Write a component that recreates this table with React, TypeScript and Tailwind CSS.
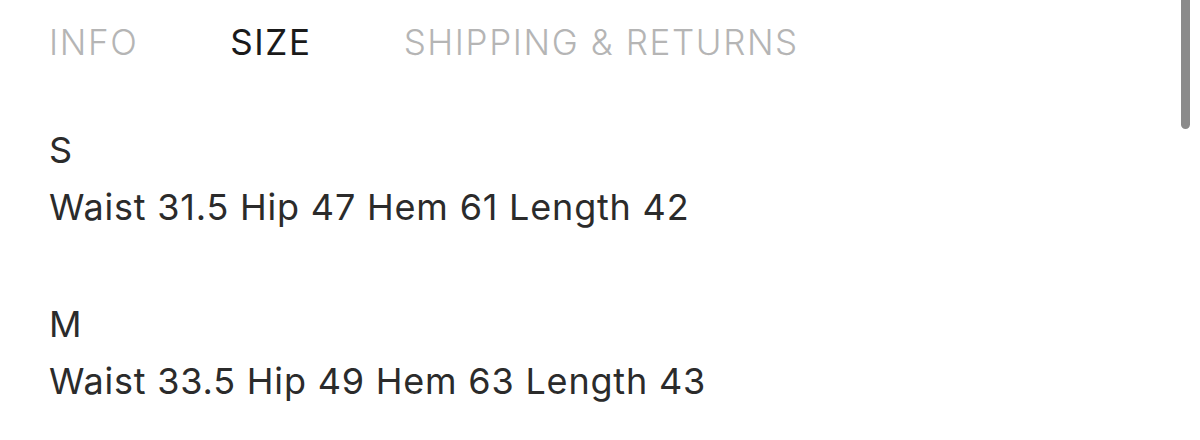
import React from "react";

const sizes = [
  { name: "S", text: "Waist 31.5 Hip 47 Hem 61 Length 42" },
  { name: "M", text: "Waist 33.5 Hip 49 Hem 63 Length 43" },
];

export default function App() {
  return (
    <div
      className="relative w-[1200px] h-[440px] overflow-hidden bg-white"
      style={{ fontFamily: "Inter, 'Noto Sans', sans-serif" }}
    >
      <div className="flex items-center pl-[49px] pt-[20px] text-[35px] leading-[44px] tracking-[1.6px]">
        <span className="text-[#b5b5b5] font-light">INFO</span>
        <span className="ml-[92px] text-[#1a1a1a]">SIZE</span>
        <span className="ml-[92px] text-[#b5b5b5] font-light">SHIPPING &amp; RETURNS</span>
      </div>
      <div className="flex flex-col gap-[73px] pl-[49px] pt-[64px] text-[#2b2b2b]">
        {sizes.map((s) => (
          <div key={s.name} className="flex flex-col gap-[13px] text-[36px] leading-[44px] tracking-[0.8px]">
            <span>{s.name}</span>
            <span>{s.text}</span>
          </div>
        ))}
      </div>
      <div className="absolute left-[1181px] top-0 w-[9px] h-[129px] rounded-b-full bg-[#8a8a8a]" />
    </div>
  );
}
